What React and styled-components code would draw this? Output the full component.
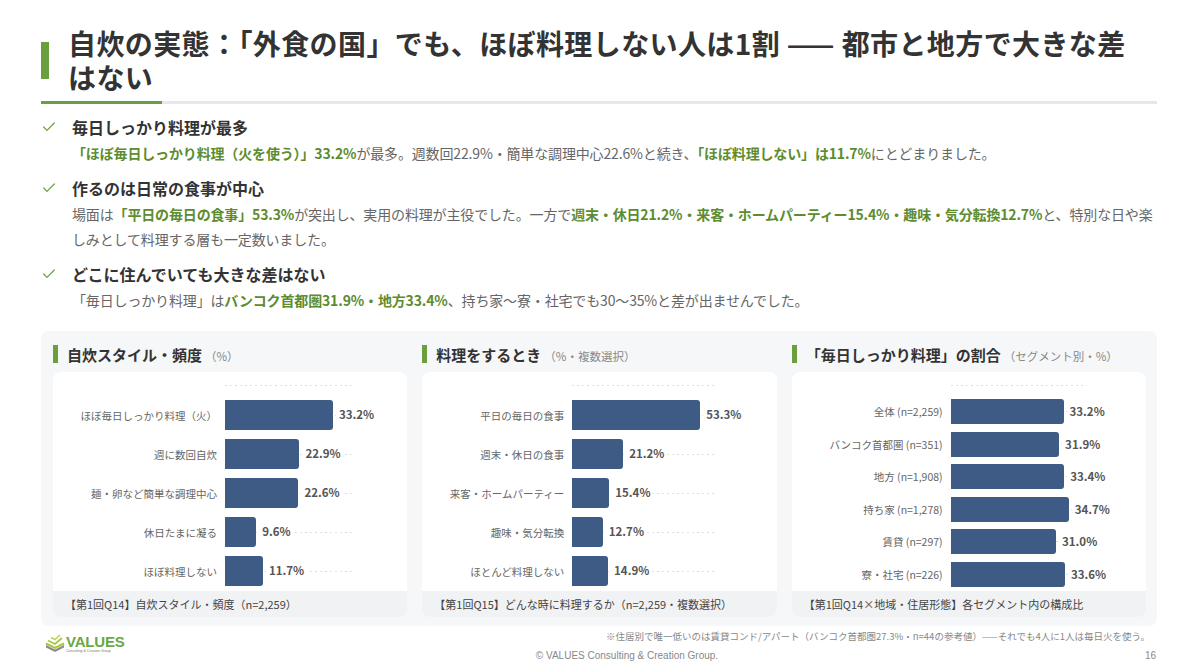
import React from "react";
import styled, { createGlobalStyle } from "styled-components";
import { Check } from "lucide-react";

const GREEN = "#6b9e3c";
const GREEN_TEXT = "#5d8c2f";
const BAR = "#3d5b84";

const GlobalStyle = createGlobalStyle`
  body {
    margin: 0;
    background: #fff;
    font-family: "Noto Sans CJK JP", "Noto Sans", sans-serif;
    color: #333;
  }
`;

const Page = styled.div`
  width: 1200px;
  height: 671px;
  box-sizing: border-box;
  padding: 0 43px 0 41px;
  display: flex;
  flex-direction: column;
  overflow: hidden;
`;

const TitleRow = styled.div`
  display: flex;
  align-items: center;
  gap: 19px;
  padding-top: 26px;
`;

const TitleBar = styled.div`
  flex: none;
  width: 8px;
  height: 37px;
  background: ${GREEN};
`;

const Title = styled.h1`
  margin: 0;
  font-size: 28px;
  line-height: 34px;
  font-weight: 700;
  letter-spacing: 0.4px;
  color: #333;
  padding-right: 20px;
`;

const Divider = styled.div`
  margin-top: 7px;
  height: 3px;
  background: #e4e7eb;
`;

const DividerAccent = styled.div`
  width: 121px;
  height: 100%;
  background: ${GREEN};
`;

const Points = styled.ul`
  list-style: none;
  margin: 11px 0 0;
  padding: 0;
  display: flex;
  flex-direction: column;
  gap: 10px;
`;

const Point = styled.li`
  display: grid;
  grid-template-columns: 31px 1fr;
`;

const CheckCell = styled.div`
  height: 24px;
  display: flex;
  align-items: center;
  color: ${GREEN};
`;

const PointHeading = styled.div`
  font-size: 16px;
  line-height: 24px;
  font-weight: 700;
  color: #333;
`;

const PointBody = styled.p`
  grid-column: 2;
  margin: 2px 0 0;
  font-size: 14px;
  line-height: 25px;
  letter-spacing: -0.15px;
  color: #666;
`;

const Em = styled.strong`
  color: ${GREEN_TEXT};
  font-weight: 700;
`;

const Panel = styled.section`
  margin-top: 18px;
  background: #f6f7f8;
  border-radius: 8px;
  padding: 11px 11px 9px 12px;
  display: grid;
  grid-template-columns: repeat(3, 1fr);
  column-gap: 15px;
`;

const ChartHead = styled.div`
  display: flex;
  align-items: center;
  gap: 9px;
  height: 24px;
  margin-bottom: 6px;
`;

const HeadBar = styled.div`
  flex: none;
  width: 5px;
  height: 18px;
  background: ${GREEN};
`;

const HeadTitle = styled.span`
  font-size: 15px;
  font-weight: 700;
  color: #333;
`;

const HeadUnit = styled.span`
  font-size: 11.5px;
  color: #888;
  margin-left: 3px;
`;

const Card = styled.div`
  background: #fff;
  border-radius: 8px;
  overflow: hidden;
  padding-top: 13px;
`;

const dots = `repeating-linear-gradient(to right, #dcdfe3 0 2px, transparent 2px 5px)`;

const TopLine = styled.div`
  margin-left: ${(p) => p.$offset}px;
  width: ${(p) => p.$width}px;
  height: 1px;
  background: ${dots};
  margin-bottom: 9.5px;
`;

const Row = styled.div`
  display: flex;
  align-items: center;
  height: ${(p) => p.$height}px;
`;

const Label = styled.div`
  flex: none;
  width: ${(p) => p.$width}px;
  box-sizing: border-box;
  padding-right: 8px;
  text-align: right;
  font-size: 10.5px;
  color: #666;
  white-space: nowrap;
`;

const Track = styled.div`
  flex: none;
  width: ${(p) => p.$width}px;
  height: 100%;
  display: flex;
  align-items: center;
  background: ${dots} center / 100% 1px no-repeat;
`;

const Bar = styled.div`
  flex: none;
  height: ${(p) => p.$height}px;
  background: ${BAR};
  border-radius: 0 3px 3px 0;
`;

const Value = styled.span`
  margin-left: 3px;
  padding: 0 3px;
  background: #fff;
  font-size: 11.5px;
  font-weight: 700;
  color: #555;
  line-height: 1;
  white-space: nowrap;
`;

const Caption = styled.div`
  height: 26px;
  display: flex;
  align-items: center;
  padding: 0 12px;
  background: #f0f2f4;
  font-size: 11px;
  color: #444;
  white-space: nowrap;
`;

const Footer = styled.footer`
  display: grid;
  grid-template-columns: 1fr auto 1fr;
`;

const Note = styled.div`
  grid-column: 2 / 4;
  grid-row: 1;
  justify-self: end;
  margin-top: 3px;
  padding-right: 7px;
  font-size: 9.5px;
  line-height: 14px;
  color: #888;
  white-space: nowrap;
`;

const Logo = styled.div`
  grid-column: 1;
  grid-row: 1 / 3;
  align-self: start;
  margin: 8px 0 0 4px;
  display: flex;
  align-items: center;
  gap: 1px;
`;

const LogoWords = styled.div`
  display: flex;
  flex-direction: column;
  line-height: 1;
`;

const LogoName = styled.span`
  font-family: "Liberation Sans Narrow", "Liberation Sans", sans-serif;
  font-weight: 700;
  font-size: 15px;
  color: #6aa842;
  letter-spacing: -0.2px;
`;

const LogoSub = styled.span`
  font-family: "Liberation Sans", sans-serif;
  font-size: 3.5px;
  color: #777;
  margin-top: 1px;
`;

const Copyright = styled.div`
  grid-column: 2;
  grid-row: 2;
  margin-top: 6px;
  padding-left: 56px;
  font-family: "Liberation Sans", "Noto Sans", sans-serif;
  font-size: 10px;
  line-height: 14px;
  color: #888;
`;

const PageNo = styled.div`
  grid-column: 3;
  grid-row: 2;
  justify-self: end;
  margin-top: 6px;
  padding-right: 1px;
  font-family: "Liberation Sans", "Noto Sans", sans-serif;
  font-size: 10px;
  line-height: 14px;
  color: #888;
`;

const charts = [
  {
    title: "自炊スタイル・頻度",
    unit: "（%）",
    labelWidth: 172,
    plotWidth: 130,
    max: 40,
    rowHeight: 39,
    barHeight: 30,
    caption: "【第1回Q14】自炊スタイル・頻度（n=2,259）",
    rows: [
      ["ほぼ毎日しっかり料理（火）", 33.2],
      ["週に数回自炊", 22.9],
      ["麺・卵など簡単な調理中心", 22.6],
      ["休日たまに凝る", 9.6],
      ["ほぼ料理しない", 11.7],
    ],
  },
  {
    title: "料理をするとき",
    unit: "（%・複数選択）",
    labelWidth: 150,
    plotWidth: 144,
    max: 60,
    rowHeight: 39,
    barHeight: 30,
    caption: "【第1回Q15】どんな時に料理するか（n=2,259・複数選択）",
    rows: [
      ["平日の毎日の食事", 53.3],
      ["週末・休日の食事", 21.2],
      ["来客・ホームパーティー", 15.4],
      ["趣味・気分転換", 12.7],
      ["ほとんど料理しない", 14.9],
    ],
  },
  {
    title: "「毎日しっかり料理」の割合",
    unit: "（セグメント別・%）",
    labelWidth: 159,
    plotWidth: 136,
    max: 40,
    rowHeight: 32.5,
    barHeight: 25,
    caption: "【第1回Q14×地域・住居形態】各セグメント内の構成比",
    rows: [
      ["全体 (n=2,259)", 33.2],
      ["バンコク首都圏 (n=351)", 31.9],
      ["地方 (n=1,908)", 33.4],
      ["持ち家 (n=1,278)", 34.7],
      ["賃貸 (n=297)", 31.0],
      ["寮・社宅 (n=226)", 33.6],
    ],
  },
];

const BarChart = ({ chart }) => (
  <div>
    <ChartHead>
      <HeadBar />
      <div>
        <HeadTitle>{chart.title}</HeadTitle>
        <HeadUnit>{chart.unit}</HeadUnit>
      </div>
    </ChartHead>
    <Card>
      <TopLine $offset={chart.labelWidth} $width={chart.plotWidth} />
      {chart.rows.map(([label, value]) => (
        <Row key={label} $height={chart.rowHeight}>
          <Label $width={chart.labelWidth}>{label}</Label>
          <Track $width={chart.plotWidth}>
            <Bar
              $height={chart.barHeight}
              style={{ width: (value / chart.max) * chart.plotWidth }}
            />
            <Value>{value.toFixed(1)}%</Value>
          </Track>
        </Row>
      ))}
      <Caption>{chart.caption}</Caption>
    </Card>
  </div>
);

const LogoMark = () => (
  <svg width="20" height="18" viewBox="0 0 20 18">
    <path d="M1 11 L10 15.5 L19 11 L19 13.5 L10 18 L1 13.5 Z" fill="#8c8c8c" />
    <path d="M1 9.5 L10 14 L19 9.5" fill="none" stroke="#a5c83c" strokeWidth="2" />
    <path d="M3 6.5 L10 10 L17 4" fill="none" stroke="#a5c83c" strokeWidth="1.8" />
    <path d="M6 3.5 L10 5.5 L15 1" fill="none" stroke="#b9d65a" strokeWidth="1.6" />
  </svg>
);

const points = [
  {
    heading: "毎日しっかり料理が最多",
    body: (
      <>
        <Em>「ほぼ毎日しっかり料理（火を使う）」33.2%</Em>が最多。週数回22.9%・簡単な調理中心22.6%と続き、
        <Em>「ほぼ料理しない」は11.7%</Em>にとどまりました。
      </>
    ),
  },
  {
    heading: "作るのは日常の食事が中心",
    body: (
      <>
        場面は<Em>「平日の毎日の食事」53.3%</Em>が突出し、実用の料理が主役でした。一方で
        <Em>週末・休日21.2%・来客・ホームパーティー15.4%・趣味・気分転換12.7%</Em>
        と、特別な日や楽しみとして料理する層も一定数いました。
      </>
    ),
  },
  {
    heading: "どこに住んでいても大きな差はない",
    body: (
      <>
        「毎日しっかり料理」は<Em>バンコク首都圏31.9%・地方33.4%</Em>
        、持ち家〜寮・社宅でも30〜35%と差が出ませんでした。
      </>
    ),
  },
];

const App = () => (
  <>
    <GlobalStyle />
    <Page>
      <TitleRow>
        <TitleBar />
        <Title>
          自炊の実態：「外食の国」でも、ほぼ料理しない人は1割 —— 都市と地方で大きな差はない
        </Title>
      </TitleRow>
      <Divider>
        <DividerAccent />
      </Divider>

      <Points>
        {points.map((point) => (
          <Point key={point.heading}>
            <CheckCell>
              <Check size={16} strokeWidth={1.8} />
            </CheckCell>
            <PointHeading>{point.heading}</PointHeading>
            <PointBody>{point.body}</PointBody>
          </Point>
        ))}
      </Points>

      <Panel>
        {charts.map((chart) => (
          <BarChart key={chart.title} chart={chart} />
        ))}
      </Panel>

      <Footer>
        <Logo>
          <LogoMark />
          <LogoWords>
            <LogoName>VALUES</LogoName>
            <LogoSub>Consulting &amp; Creation Group</LogoSub>
          </LogoWords>
        </Logo>
        <Note>
          ※住居別で唯一低いのは賃貸コンド/アパート（バンコク首都圏27.3%・n=44の参考値）——それでも4人に1人は毎日火を使う。
        </Note>
        <Copyright>© VALUES Consulting &amp; Creation Group.</Copyright>
        <PageNo>16</PageNo>
      </Footer>
    </Page>
  </>
);

export default App;
